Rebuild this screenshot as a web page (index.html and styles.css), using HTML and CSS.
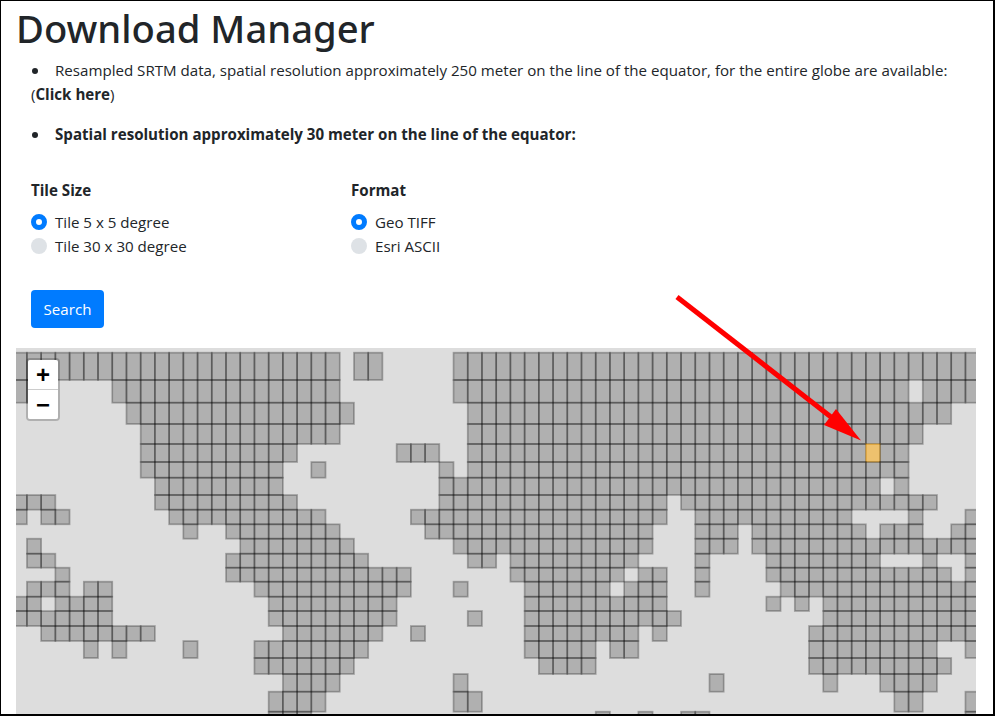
FILE: index.html
```html
<!DOCTYPE html>
<html lang="en">
<head>
  <meta charset="UTF-8" />
  <meta name="viewport" content="width=device-width, initial-scale=1" />
  <title>Download Manager</title>
  <link rel="stylesheet" href="styles.css">
</head>
<body>

<div class="frame">
  <h1 class="title">Download Manager</h1>

  <div class="intro">
    <p class="note"><span class="dot"></span>Resampled SRTM data, spatial resolution approximately 250 meter on the line of the equator, for the entire globe are available: (<b>Click here</b>)</p>
    <p class="note"><span class="dot"></span><b>Spatial resolution approximately 30 meter on the line of the equator:</b></p>
  </div>

  <div class="options">
    <div class="option-col">
      <div class="option-title">Tile Size</div>
      <label class="radio"><span class="radio-mark on"></span>Tile 5 x 5 degree</label>
      <label class="radio"><span class="radio-mark"></span>Tile 30 x 30 degree</label>
    </div>
    <div class="option-col">
      <div class="option-title">Format</div>
      <label class="radio"><span class="radio-mark on"></span>Geo TIFF</label>
      <label class="radio"><span class="radio-mark"></span>Esri ASCII</label>
    </div>
  </div>

  <button class="search-btn">Search</button>

  <div class="map">
    <svg id="tiles" class="tiles" width="960" height="368"></svg>
    <div class="zoom-bar">
      <a class="zoom-btn">+</a>
      <a class="zoom-btn">&minus;</a>
    </div>
  </div>

  <svg class="arrow" width="995" height="716" viewBox="0 0 995 716">
    <line x1="677" y1="297" x2="840" y2="424" stroke="#ff0000" stroke-width="5" />
    <polygon points="861,440.5 836,409 824,425" fill="#ff0000" />
  </svg>
</div>

<script src="map.js"></script>
</body>
</html>
```

FILE: styles.css
```css
html, body {
  margin: 0;
  height: 100%;
  overflow: hidden;
}
body {
  font-family: "Open Sans", "Noto Sans", Arial, sans-serif;
  font-size: 15.12px;
  line-height: 24px;
  color: #212529;
  background: #fff;
}
.frame {
  position: relative;
  box-sizing: border-box;
  height: 716px;
  overflow: hidden;
  border-style: solid;
  border-color: #000;
  border-width: 1px 2px 2px 1px;
}
.title {
  margin: 0;
  padding: 0 0 3px 15px;
  font-family: "Noto Sans", "Open Sans", Arial, sans-serif;
  font-size: 38.2px;
  font-weight: 500;
  line-height: 54px;
}
.intro {
  padding: 0 30px;
}
.note {
  margin: 0 0 16px;
}
.dot {
  display: inline-block;
  width: 6px;
  height: 6px;
  margin: 0 17px 2px 1px;
  border-radius: 50%;
  background: #212529;
}
.options {
  display: flex;
  margin-top: 32px;
  padding-left: 30px;
}
.option-col {
  display: flex;
  flex-direction: column;
  width: 320px;
}
.option-title {
  margin-bottom: 8px;
  font-weight: 700;
}
.radio {
  display: flex;
  align-items: center;
}
.radio-mark {
  box-sizing: border-box;
  width: 16px;
  height: 16px;
  margin-right: 8px;
  border-radius: 50%;
  background: #dee2e6;
}
.radio-mark.on {
  background: #fff;
  border: 5px solid #007bff;
}
.search-btn {
  display: block;
  height: 38px;
  width: 73px;
  margin: 32px 0 20px 30px;
  border: 0;
  border-radius: 4px;
  background: #007bff;
  color: #fff;
  font: inherit;
}
.map {
  position: relative;
  width: 960px;
  height: 368px;
  margin-left: 15px;
  background: #ddd;
  overflow: hidden;
}
.tiles {
  display: block;
}
.zoom-bar {
  position: absolute;
  left: 10px;
  top: 10px;
  width: 30px;
  border: 2px solid rgba(0, 0, 0, 0.2);
  border-radius: 4px;
  background-clip: padding-box;
}
.zoom-btn {
  display: block;
  height: 29px;
  background: #fff;
  color: #000;
  font: bold 24px/29px "Liberation Sans", Arial, sans-serif;
  text-align: center;
}
.zoom-btn:first-child {
  border-bottom: 1px solid #ccc;
  border-radius: 2px 2px 0 0;
}
.zoom-btn:last-child {
  border-radius: 0 0 2px 2px;
}
.arrow {
  position: absolute;
  left: -1px;
  top: -1px;
  pointer-events: none;
}
```

FILE: map.js
```js
// tile rows of the 5 degree grid, as [first, last] column runs
const LEFT = 12.7 - 16;
const TOP = 348;
const COL_W = 14.22;
const ROW_Y = [352.7, 380, 402.7, 424, 444, 462, 477.7, 495, 509.7, 524.3, 538.7, 553.7,
  567.7, 581.7, 596.7, 611, 626, 641, 658, 674, 691.7, 711.7, 735];

const ROWS = [
  [[0,22],[24,25],[31,67]],
  [[0,1],[7,22],[31,62],[64,67]],
  [[8,23],[32,65]],
  [[9,22],[32,63]],
  [[9,19],[27,29],[32,62]],
  [[9,18],[21,21],[30,30],[32,62]],
  [[10,18],[30,60],[62,62]],
  [[0,2],[10,19],[30,45],[47,64]],
  [[0,0],[2,3],[11,21],[28,45],[48,58],[63,63],[67,67]],
  [[12,12],[15,22],[29,44],[48,50],[52,59],[61,63],[66,67]],
  [[1,1],[16,23],[31,44],[48,50],[52,67]],
  [[1,2],[15,24],[32,33],[35,43],[48,48],[53,60],[64,64],[67,67]],
  [[3,3],[15,27],[35,42],[44,45],[48,48],[53,65],[67,67]],
  [[1,3],[5,6],[17,27],[31,31],[36,41],[43,45],[48,48],[54,67]],
  [[0,1],[3,6],[18,26],[36,45],[53,53],[55,55],[57,67]],
  [[0,6],[18,26],[32,32],[36,46],[57,67]],
  [[2,9],[19,25],[28,28],[36,43],[45,45],[56,67]],
  [[5,5],[7,7],[12,12],[17,24],[36,40],[42,43],[56,64],[67,67]],
  [[17,23],[37,40],[56,65]],
  [[19,22],[31,31],[49,49],[57,57],[61,64]],
  [[18,21],[31,32],[62,63],[67,67]],
  [[18,20],[41,41],[44,44],[47,48],[67,67]]
];

const SELECTED = { row: 4, col: 60 };
const svg = document.getElementById('tiles');

function addTile(row, col) {
  const rect = document.createElementNS('http://www.w3.org/2000/svg', 'rect');
  const picked = row === SELECTED.row && col === SELECTED.col;
  rect.setAttribute('x', LEFT + col * COL_W);
  rect.setAttribute('y', ROW_Y[row] - TOP);
  rect.setAttribute('width', COL_W);
  rect.setAttribute('height', ROW_Y[row + 1] - ROW_Y[row]);
  rect.setAttribute('fill', picked ? '#ffa500' : '#000');
  rect.setAttribute('fill-opacity', picked ? 0.5 : 0.2);
  rect.setAttribute('stroke', picked ? '#ffa500' : '#000');
  rect.setAttribute('stroke-opacity', 0.28);
  rect.setAttribute('stroke-width', 1.7);
  svg.appendChild(rect);
}

ROWS.forEach((runs, row) => {
  runs.forEach(([first, last]) => {
    for (let col = first; col <= last; col++) addTile(row, col);
  });
});
```
